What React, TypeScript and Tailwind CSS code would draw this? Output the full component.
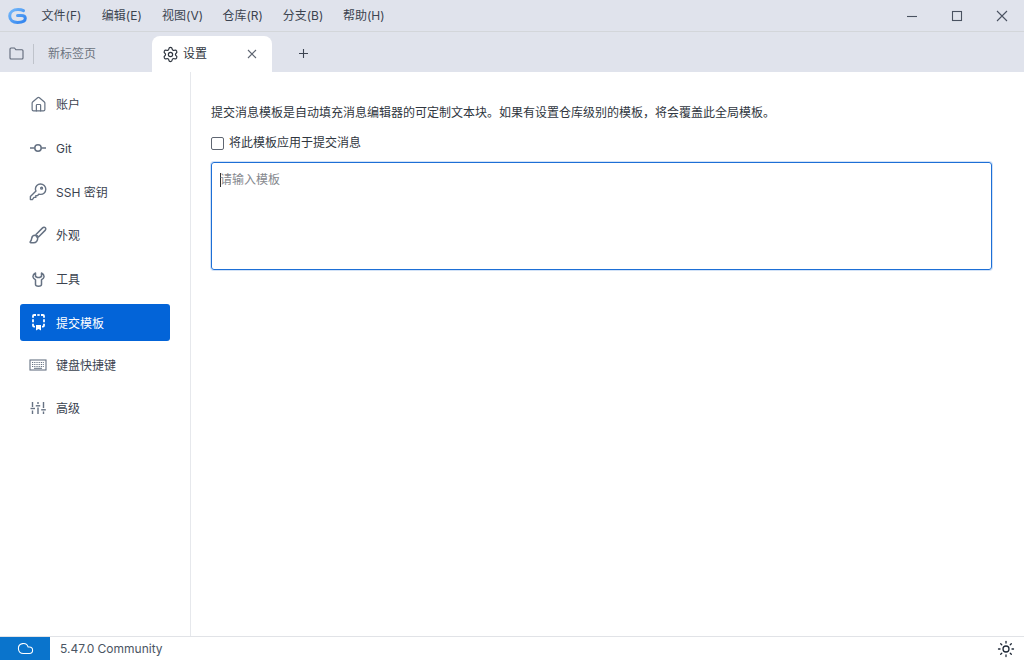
import React from "react";
import { Home, Settings, Cloud, Sun } from "lucide-react";

const font = "font-['Inter','Noto_Sans_CJK_SC',sans-serif]";

function Logo() {
  return (
    <svg width="19" height="16" viewBox="0 0 19 16" fill="none">
      <defs>
        <linearGradient id="lg" x1="0" y1="0" x2="1" y2="1">
          <stop offset="0" stopColor="#74b8fa" />
          <stop offset="1" stopColor="#2f82ee" />
        </linearGradient>
      </defs>
      <path d="M15.5 2.6 C14 1.9 12.5 1.6 10 1.6 C5 1.6 1.7 4.2 1.7 8 C1.7 12 5 14.4 9.5 14.4 C13.8 14.4 17.3 13 17.3 10.2 C17.3 8.2 15.4 7.4 13 7.4 H9.5" stroke="url(#lg)" strokeWidth="3" strokeLinecap="round" strokeLinejoin="round" />
    </svg>
  );
}

function Git() {
  return (
    <svg width="18" height="18" viewBox="0 0 18 18" fill="none" stroke="currentColor" strokeWidth="1.5">
      <circle cx="9" cy="9" r="3.2" />
      <path d="M1 9 H5.8 M12.2 9 H17" />
    </svg>
  );
}

function KeyIcon() {
  return (
    <svg width="18" height="18" viewBox="0 0 18 18" fill="none" stroke="currentColor" strokeWidth="1.4" strokeLinejoin="round">
      <path d="M11.4 1 C14.4 1 16.8 3.3 16.8 6.2 C16.8 9.2 14.4 11.4 11.6 11.4 C11 11.4 10.5 11.3 10 11.1 L8.6 12.6 H6.8 V14.4 H5 L3.4 16.6 H1.4 V13.6 L7 8 C6.6 7.3 6.4 6.7 6.4 6 C6.4 3.3 8.6 1 11.4 1 Z" />
      <circle cx="12.6" cy="5.2" r="0.9" />
    </svg>
  );
}

function BrushIcon() {
  return (
    <svg width="18" height="18" viewBox="0 0 18 18" fill="none" stroke="currentColor" strokeWidth="1.5" strokeLinejoin="round">
      <path d="M7 8.5 L13.6 1.9 C14.4 1.1 15.6 1 16.3 1.7 C17 2.4 16.9 3.6 16.1 4.4 L9.5 11 Z" />
      <path d="M6.6 9.4 C4.6 9.2 3 10.4 2.7 12.4 C2.5 13.8 2.2 14.8 1.2 15.8 C1 16.3 1.2 16.7 1.8 16.7 H4.6 C7 16.7 8.8 14.8 8.7 12 Z" />
    </svg>
  );
}

function Wrench() {
  return (
    <svg width="13" height="15" viewBox="0 0 13 15" fill="none" stroke="currentColor" strokeWidth="1.5" strokeLinejoin="round">
      <path d="M3.5 1 C1.5 2 .8 3.5 1 5 C1.2 6.5 2.5 7.2 3.5 7.8 V12.5 C3.5 13.5 4.5 14.2 6.5 14.2 C8.5 14.2 9.5 13.5 9.5 12.5 V7.8 C10.5 7.2 11.8 6.5 12 5 C12.2 3.5 11.5 2 9.5 1 V4.5 L7.5 5.5 H5.5 L3.5 4.5 Z" />
    </svg>
  );
}

function Template() {
  return (
    <svg width="13" height="17" viewBox="0 0 13 17" fill="none" stroke="currentColor" strokeWidth="1.8">
      <path d="M1 3.8 V2 Q1 1 2 1 H4" />
      <path d="M5.3 1 H7.7" />
      <path d="M9 1 H11 Q12 1 12 2 V3.8" />
      <path d="M1 5.3 V8.2" />
      <path d="M12 5.3 V8.2" />
      <path d="M1 9.7 V11.6 Q1 12.6 2 12.6 H3" />
      <path d="M10 12.6 H11 Q12 12.6 12 11.6 V9.7" />
      <path d="M4 11 H9 V16.5 L6.5 15 L4 16.5 Z" fill="currentColor" stroke="none" />
    </svg>
  );
}

function KeyboardIcon() {
  return (
    <svg width="18" height="12" viewBox="0 0 18 12" fill="none" stroke="currentColor">
      <rect x="1" y="1" width="16" height="10" strokeWidth="1.1" />
      <path d="M3 3.5 H15 M3 5.5 H15" strokeWidth="1.1" strokeDasharray="1 0.8" />
      <path d="M3 7.5 H15" strokeWidth="1.1" strokeDasharray="1 0.8" />
      <path d="M5 9.3 H13" strokeWidth="1" />
    </svg>
  );
}

function Sliders() {
  return (
    <svg width="16" height="14" viewBox="0 0 16 14" fill="none" stroke="currentColor" strokeWidth="1.4">
      <path d="M2.5 1 V6 M2.5 9.5 V13" />
      <path d="M0.5 7.5 H5" />
      <path d="M8 1 V3 M8 6.5 V13" />
      <path d="M5.8 4.8 H10.2" />
      <path d="M13.5 1 V7 M13.5 10.5 V13" />
      <path d="M11.2 8.8 H15.8" />
    </svg>
  );
}

function WinMin() {
  return <svg width="12" height="12" viewBox="0 0 12 12"><path d="M1 6.5 H11" stroke="currentColor" strokeWidth="1.1" /></svg>;
}
function WinMax() {
  return <svg width="12" height="12" viewBox="0 0 12 12" fill="none"><rect x="1.5" y="1.5" width="9" height="9" stroke="currentColor" strokeWidth="1.1" /></svg>;
}
function WinClose() {
  return <svg width="12" height="12" viewBox="0 0 12 12" fill="none"><path d="M1 1 L11 11 M11 1 L1 11" stroke="currentColor" strokeWidth="1.1" /></svg>;
}
function CloseSmall() {
  return <svg width="10" height="10" viewBox="0 0 10 10" fill="none"><path d="M1 1 L9 9 M9 1 L1 9" stroke="currentColor" strokeWidth="1.1" /></svg>;
}
function PlusSmall() {
  return <svg width="9" height="9" viewBox="0 0 9 9" fill="none"><path d="M4.5 0 V9 M0 4.5 H9" stroke="currentColor" strokeWidth="1.1" /></svg>;
}
function FolderIcon() {
  return <svg width="15" height="13" viewBox="0 0 15 13" fill="none"><path d="M1 2 Q1 1 2 1 H5.5 L7 2.8 H13 Q14 2.8 14 3.8 V11 Q14 12 13 12 H2 Q1 12 1 11 Z" stroke="currentColor" strokeWidth="1.1" strokeLinejoin="round" /></svg>;
}

const items: { label: string; icon: React.ReactNode; active?: boolean; mb: string }[] = [
  { label: "账户", icon: <Home size={17} strokeWidth={1.7} />, mb: "mb-[6.75px]" },
  { label: "Git", icon: <Git />, mb: "mb-[6.75px]" },
  { label: "SSH 密钥", icon: <KeyIcon />, mb: "mb-[6.75px]" },
  { label: "外观", icon: <BrushIcon />, mb: "mb-[6.75px]" },
  { label: "工具", icon: <Wrench />, mb: "mb-[6.75px]" },
  { label: "提交模板", icon: <Template />, active: true, mb: "mb-[5.5px]" },
  { label: "键盘快捷键", icon: <KeyboardIcon />, mb: "mb-[6px]" },
  { label: "高级", icon: <Sliders />, mb: "mb-[6px]" },
];

const menus = ["文件(F)", "编辑(E)", "视图(V)", "仓库(R)", "分支(B)", "帮助(H)"];

export default function App() {
  return (
    <div className={`w-[1024px] h-[660px] flex flex-col overflow-hidden bg-white text-[#2f3640] ${font}`}>
      {/* title bar */}
      <div className="h-[32px] shrink-0 flex items-center bg-[#e0e3ec] border-b border-[#d3d6da]">
        <div className="w-[32px] pl-[8px] flex items-center"><Logo /></div>
        <div className="flex items-center gap-[20.3px] pl-[9.5px] text-[12px] text-[#3b4350]">
          {menus.map((m) => <span key={m} className="w-[40px] whitespace-nowrap">{m}</span>)}
        </div>
        <div className="ml-auto flex items-center text-[#4a5261]">
          <span className="w-[44px] flex justify-center"><WinMin /></span>
          <span className="w-[46px] flex justify-center"><WinMax /></span>
          <span className="w-[44px] flex justify-center pr-[1px]"><WinClose /></span>
        </div>
      </div>
      {/* tab bar */}
      <div className="h-[40px] shrink-0 flex bg-[#e0e3ec]">
        <div className="w-[33px] flex items-center pl-[9px] pt-[2px] text-[#5f6878]"><FolderIcon /></div>
        <div className="w-px h-[20px] mt-[12px] bg-[#bfc3cb]" />
        <div className="w-[118px] flex items-center pl-[14px] pt-[3px] text-[12px] text-[#6d7480]">新标签页</div>
        <div className="mt-[4px] w-[120px] h-[36px] bg-white rounded-t-[8px] flex items-center pl-[10px] pr-[15px] text-[12px] text-[#2f3640]">
          <Settings size={17} strokeWidth={1.7} />
          <span className="ml-[4px]">设置</span>
          <span className="ml-auto text-[#5f6672] flex"><CloseSmall /></span>
        </div>
        <div className="ml-[27px] pt-[2px] flex items-center text-[#3b4350]"><PlusSmall /></div>
      </div>
      {/* body */}
      <div className="flex-1 min-h-0 flex">
        <div className="w-[191px] shrink-0 border-r border-[#e6e8ec] pt-[13.5px] pl-[20px] pr-[20px]">
          {items.map((it) => (
            <div key={it.label} className={`h-[37px] ${it.mb} rounded-[3px] flex items-center pl-[9px] text-[12px] ${it.active ? "bg-[#0364d8] text-white" : "text-[#3b4350]"}`}>
              <span className={`w-[18px] flex justify-center ${it.active ? "text-white" : "text-[#667283]"}`}>{it.icon}</span>
              <span className="ml-[9px] pt-[2px]">{it.label}</span>
            </div>
          ))}
        </div>
        <div className="flex-1 pt-[32px] pl-[20px] pr-[32px]">
          <p className="text-[12px] leading-[18px] text-[#2f3640]">提交消息模板是自动填充消息编辑器的可定制文本块。如果有设置仓库级别的模板，将会覆盖此全局模板。</p>
          <div className="mt-[12px] flex items-center h-[18px] text-[12px]">
            <span className="w-[13px] h-[13px] border border-[#5f6672] rounded-[2px] bg-white" />
            <span className="ml-[5px]">将此模板应用于提交消息</span>
          </div>
          <div className="mt-[10px] h-[108px] w-[781px] border border-[#1d6fd6] shadow-[0_0_0_1px_rgba(29,111,214,0.2)] rounded-[3px] pt-[8px] pl-[8px] text-[12px] leading-[18px] text-[#85888e] flex">
            <span className="w-px h-[14px] mt-[2px] -mr-px bg-[#333]" />
            <span>请输入模板</span>
          </div>
        </div>
      </div>
      {/* status bar */}
      <div className="h-[24px] shrink-0 flex items-center border-t border-[#e1e3e7] bg-white text-[12px] text-[#4b5563]">
        <div className="w-[50px] h-full bg-[#0a74cc] flex items-center justify-center text-white"><Cloud size={17} strokeWidth={1.5} /></div>
        <span className="ml-[10px]">5.47.0 Community</span>
        <Sun size={18} strokeWidth={1.7} className="ml-auto mr-[9px] text-[#1f2937]" />
      </div>
    </div>
  );
}
